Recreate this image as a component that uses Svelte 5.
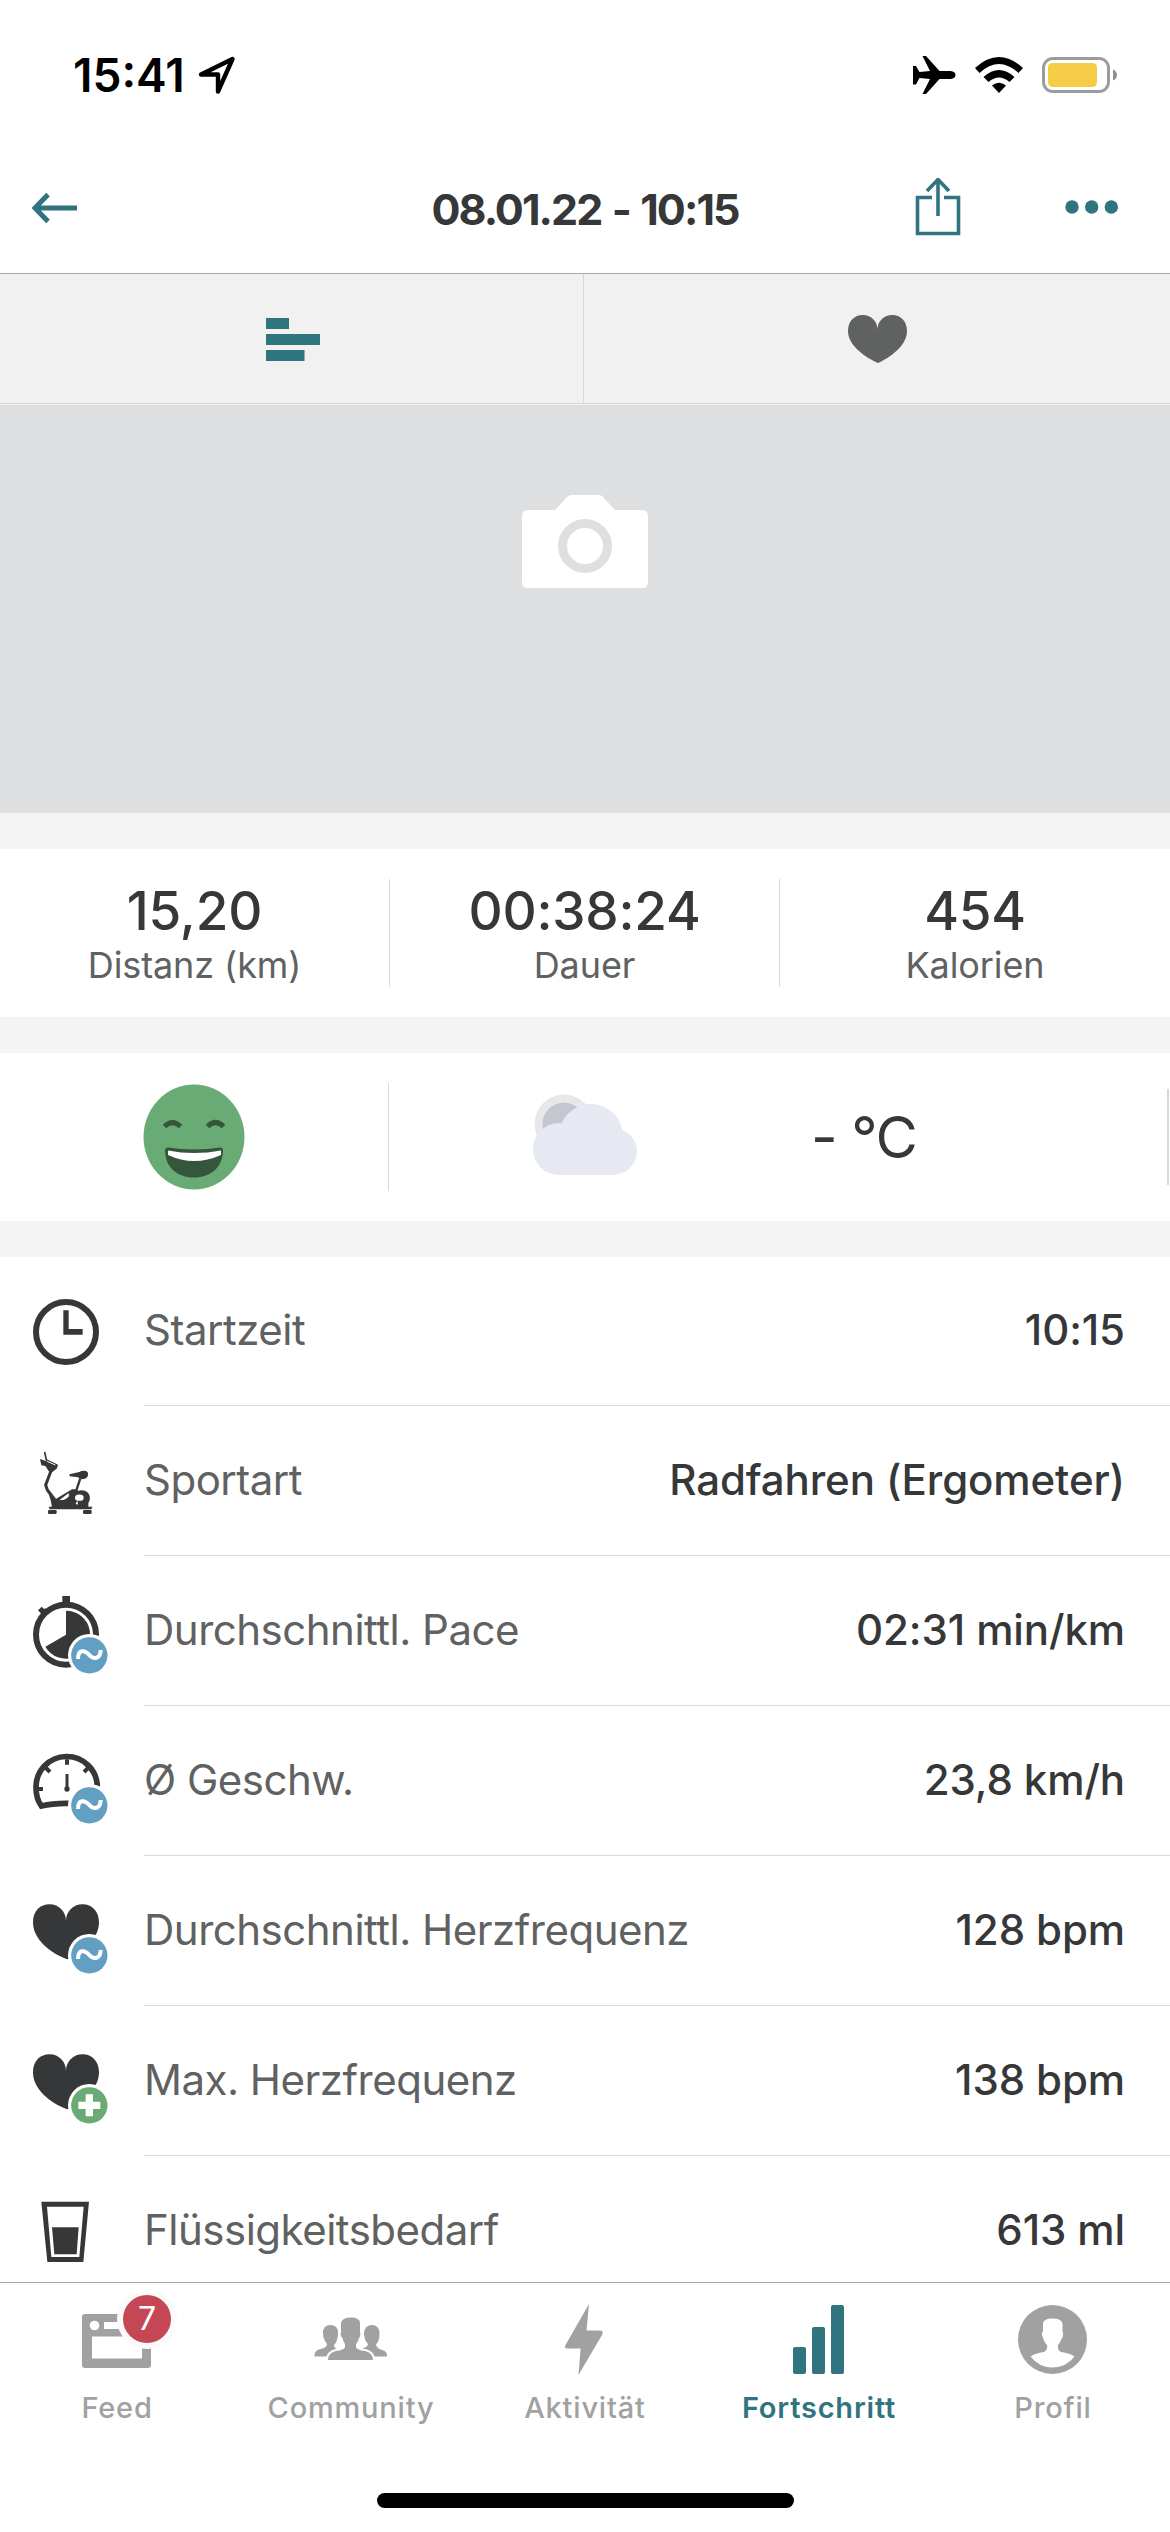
<script lang="ts">
	type Row = { icon: string; badge?: 'avg' | 'max'; label: string; value: string };

	const stats = [
		{ value: '15,20', label: 'Distanz (km)' },
		{ value: '00:38:24', label: 'Dauer' },
		{ value: '454', label: 'Kalorien' }
	];

	const rows: Row[] = [
		{ icon: 'clock', label: 'Startzeit', value: '10:15' },
		{ icon: 'bike', label: 'Sportart', value: 'Radfahren (Ergometer)' },
		{ icon: 'stopwatch', badge: 'avg', label: 'Durchschnittl. Pace', value: '02:31 min/km' },
		{ icon: 'speed', badge: 'avg', label: 'Ø Geschw.', value: '23,8 km/h' },
		{ icon: 'heart', badge: 'avg', label: 'Durchschnittl. Herzfrequenz', value: '128 bpm' },
		{ icon: 'heart', badge: 'max', label: 'Max. Herzfrequenz', value: '138 bpm' },
		{ icon: 'glass', label: 'Flüssigkeitsbedarf', value: '613 ml' }
	];

	const tabs = ['Feed', 'Community', 'Aktivität', 'Fortschritt', 'Profil'];
	let active = $state('Fortschritt');
</script>

<div class="screen">
	<div class="status-bar">
		<div class="status-time">
			<span>15:41</span>
			<svg width="38" height="40" viewBox="0 0 38 40" fill="none" stroke="#000" stroke-width="4.4" stroke-linejoin="round">
				<path d="M34.5 4L3 19.5H20V36.5Z" />
			</svg>
		</div>
		<div class="status-icons">
			<svg width="43" height="40" viewBox="0 0 43 40">
				<path d="M0 11H3L6.5 17L17 16L9.5 1H13L26.5 16H37.5Q42.5 16.5 42.5 20Q42.5 23.5 37.5 24H26.5L13 39H9.5L17 24L6.5 23L3 29.5H0Z" />
			</svg>
			<svg width="48" height="38" viewBox="0 0 48 38">
				<path d="M0 12Q24 -10 48 12L43.5 17Q24 -1 4.5 17Z" />
				<path d="M8.5 21Q24 7 39.5 21L34.5 26Q24 17 13.5 26Z" />
				<path d="M17 29.5Q24 24 31 29.5L24 37Z" />
			</svg>
			<svg width="76" height="38" viewBox="0 0 76 38">
				<rect x="1.5" y="2.5" width="65" height="33" rx="9.5" fill="none" stroke="#9c9c9c" stroke-width="3" />
				<rect x="6" y="7" width="49" height="24" rx="4.5" fill="#f6cc46" />
				<path d="M71 13.5Q75 15.5 75 19Q75 22.5 71 24.5Z" fill="#8e8e8e" />
			</svg>
		</div>
	</div>

	<header class="nav">
		<button class="icon-btn" aria-label="Zurück">
			<svg width="48" height="32" viewBox="0 0 48 32" fill="none" stroke="currentColor" stroke-width="5">
				<path d="M46 16H4M17 2.5L4 16L17 29.5" />
			</svg>
		</button>
		<h1>08.01.22 - 10:15</h1>
		<div class="nav-actions">
			<button class="icon-btn" aria-label="Teilen">
				<svg width="46" height="60" viewBox="0 0 46 60" fill="none" stroke="currentColor" stroke-width="3.6">
					<path d="M17 19.5H2.5V55.5H43.5V19.5H29M23 38V3M12 13L23 1.5L34 13" />
				</svg>
			</button>
			<button class="icon-btn" aria-label="Mehr">
				<svg width="54" height="16" viewBox="0 0 54 16" fill="currentColor">
					<circle cx="8" cy="7" r="6.7" />
					<circle cx="27.7" cy="7" r="6.7" />
					<circle cx="47.3" cy="7" r="6.7" />
				</svg>
			</button>
		</div>
	</header>

	<main>
		<div class="segments">
			<div class="segment">
				<svg width="54" height="44" viewBox="0 0 54 44" fill="#30747f">
					<path d="M0 1H23V12H0ZM0 17H54V28H0ZM0 33H38.5V44H0Z" />
				</svg>
			</div>
			<div class="segment">
				<svg width="59" height="48" viewBox="0 0 198 165" preserveAspectRatio="none" fill="#606161">
					<path d="M101 165C60 147 0 106 0 55C0 20 22 0 49 0C80 0 99 24 99 50C99 24 118 0 149 0C176 0 198 20 198 55C198 106 140 147 101 165Z" />
				</svg>
			</div>
		</div>

		<div class="photo">
			<svg width="126" height="94" viewBox="0 0 126 94">
				<path fill="#fff" d="M6 15H33L45 2Q47 0 49 0H77Q79 0 81 2L93 15H120Q126 15 126 21V87Q126 93 120 93H6Q0 93 0 87V21Q0 15 6 15Z" />
				<circle cx="63" cy="51" r="22.5" fill="none" stroke="#dedfe1" stroke-width="9" />
			</svg>
		</div>

		<section class="strip">
			{#each stats as stat}
				<div class="stat">
					<div class="stat-value">{stat.value}</div>
					<div class="stat-label">{stat.label}</div>
				</div>
			{/each}
		</section>

		<section class="strip">
			<div class="mood">
				<svg width="102" height="106" viewBox="0 0 102 106">
					<ellipse cx="51" cy="53" rx="50.5" ry="52.5" fill="#69ab74" />
					<path d="M21.5 42.5Q29.5 34.5 37.5 42.5M64.5 42.5Q72.5 34.5 80.5 42.5" fill="none" stroke="#35563a" stroke-width="5" />
					<path d="M22 66Q22 63 25 63.5Q51 67.5 77 63.5Q80 63 80 66C80 83 68 93.5 51 93.5S22 83 22 66Z" fill="#35563a" />
					<path d="M25 66.5Q51 71.5 78 66.5V71Q51 83 25 71Z" fill="#fff" />
				</svg>
			</div>
			<div class="weather">
				<svg width="106" height="84" viewBox="0 0 106 84">
					<circle cx="32" cy="32" r="29.5" fill="#e6e8ea" />
					<circle cx="32" cy="32" r="21.5" fill="#c4c7cf" />
					<g fill="#e6e9f2">
						<circle cx="59" cy="44" r="32" />
						<circle cx="27" cy="57" r="26" />
						<circle cx="82" cy="59.5" r="23" />
						<rect x="27" y="50" width="55" height="33" />
					</g>
				</svg>
				<span class="temp">- °C</span>
			</div>
		</section>

		<ul class="details">
			{#each rows as row}
				<li>
					<svg width="144" height="150" viewBox="0 0 432 450" fill="#363738">
						{#if row.icon === 'clock'}
							<circle cx="198" cy="228" r="90" fill="none" stroke="#363738" stroke-width="18" />
							<path d="M190 163H206V219H248V236H190Z" />
						{:else if row.icon === 'bike'}
							<g transform="translate(0 -438)">
								<path d="M120 597L174 616L170 626L157 636H148L136 618L124 616Z" />
								<path d="M134 576L139 600L172 616" fill="none" stroke="#363738" stroke-width="5" />
								<path d="M142 604L166 615" stroke="#fff" stroke-width="3" />
								<path d="M154 630L137 675L142 690L165 720" fill="none" stroke="#363738" stroke-width="9" />
								<path d="M208 643L238 636Q246 631 258 633Q266 637 264 646Q262 656 248 658Q238 657 234 652L209 649Z" />
								<path d="M241 655L228 694" stroke="#363738" stroke-width="7" />
								<path d="M146 702L166 718L216 688L226 688L234 692Q258 687 267 703Q273 717 265 729V742H156L152 720Z" />
								<ellipse cx="238" cy="713" rx="13" ry="9.5" fill="#fff" />
								<path d="M181 719Q192 722 204 711Q209 704 205 701ZM232 724L228 731L234 733" fill="#fff" stroke="#fff" stroke-width="2" />
								<path d="M146 740H277L274 748H149Z" />
								<rect x="144" y="750" width="26" height="12" rx="4" />
								<rect x="249" y="750" width="26" height="12" rx="4" />
							</g>
						{:else if row.icon === 'stopwatch'}
							<circle cx="198" cy="236" r="90" fill="none" stroke="#363738" stroke-width="18" />
							<rect x="187" y="120" width="23" height="20" />
							<path d="M114 163L125 152L132 159L136 157L144 165L130 178L121 170Z" />
							<path d="M198 236V164A72 72 0 1 1 136 272Z" />
						{:else if row.icon === 'speed'}
							<g transform="translate(0 -438)" fill="none" stroke="#363738">
								<path d="M207 730Q160 729 124 738Q108 715 108 683A92 92 0 0 1 292 680" stroke-width="17" />
								<path d="M201 598V614M138 624L150 636M264 624L252 636M112 687H129" stroke-width="12" />
								<path d="M201 642V688" stroke-width="9" />
								<circle cx="201" cy="687" r="8" fill="#363738" stroke="none" />
							</g>
						{:else if row.icon === 'heart'}
							<path d="M202 310C150 291 99 250 99 199C99 164 122 145 148 145C178 145 198 168 198 195C198 168 218 145 248 145C276 145 297 166 297 199C297 250 246 291 202 310Z" />
						{:else}
							<g transform="translate(0 -888)">
								<path fill-rule="evenodd" d="M124 1025H267L250 1206H142ZM141 1040L154 1191H238L251 1040Z" />
								<path d="M156 1102H236L230 1183H163Z" />
							</g>
						{/if}
						{#if row.badge}
							<circle cx="268" cy="298" r="64" fill="#fff" />
							<circle cx="268" cy="298" r="54.5" fill={row.badge === 'avg' ? '#629fc3' : '#69ab74'} />
							{#if row.badge === 'avg'}
								<path d="M234 309C234 280 253 280 268 297S302 306 302 282" fill="none" stroke="#fff" stroke-width="12" />
							{:else}
								<path d="M257 265H279V287H301V309H279V331H257V309H235V287H257Z" fill="#fff" />
							{/if}
						{/if}
					</svg>
					<div class="row-body">
						<span class="row-label">{row.label}</span>
						<span class="row-value">{row.value}</span>
					</div>
				</li>
			{/each}
		</ul>
	</main>

	<nav class="tab-bar">
		<div class="tabs">
			{#each tabs as tab}
				<button class="tab" class:active={active === tab} onclick={() => (active = tab)}>
					<svg width="120" height="90" viewBox="0 0 120 90" fill="currentColor">
						{#if tab === 'Feed'}
							<path fill-rule="evenodd" d="M28 21H91Q94 21 94 24V72Q94 75 91 75H28Q25 75 25 72V24Q25 21 28 21ZM35 43.5V65.5H85V43.5Z" />
							<circle cx="37.5" cy="32.5" r="4.8" fill="#fff" />
							<rect x="47" y="29" width="30" height="7" fill="#fff" />
							<circle cx="90" cy="26" r="30" fill="#fafafa" />
							<circle cx="90" cy="26" r="24" fill="#c54756" />
							<text x="90" y="37" class="badge-text">7</text>
						{:else if tab === 'Community'}
							<path d="M32 40Q32 32 39.5 32T47 40Q47 48 43 52Q43 56 49 57L41 63.5H23.5Q23 58 28 56.5Q36 55 36 51Q32 46 32 40Z" />
							<path d="M73 40Q74 32 81 32T88.5 40Q88.5 49 85 51Q85 55 91 57Q96.5 58 96 63.5H80L70 56Q77 54 77 51Q73 47 73 40Z" />
							<path d="M50 30Q51 24.5 60 24.5T69 30V39Q70 43 68 45Q67 49 65 51V54Q66 57 74 58Q82 60 82 67H37Q37 60 45 58Q53 57 54 54V51Q52 48 51.5 45Q49 43 50 39Z" stroke="#fff" stroke-width="4" paint-order="stroke" />
						{:else if tab === 'Aktivität'}
							<path d="M64 11L40.5 52Q39 55.5 42 55.5H55.6L53.5 82L77 42Q79 38 75.5 37.5H61.5Z" />
						{:else if tab === 'Fortschritt'}
							<rect x="34" y="54" width="13" height="27" rx="2" />
							<rect x="53" y="34" width="13" height="47" rx="2" />
							<rect x="72" y="12" width="13" height="69" rx="2" />
						{:else}
							<circle cx="59.5" cy="46.5" r="34.5" />
							<path d="M50 31Q50 25.5 59.5 25.5T69.5 31V38Q71 42 69 45Q67 50 65 52Q64 57 68 59Q77 60 81.5 63.5Q73 74.5 59.5 74.5T37.5 63.5Q42 60 51 59Q55 57 54 52Q51 49 50 45Q48 41 50 38Z" fill="#fff" />
						{/if}
					</svg>
					<span>{tab}</span>
				</button>
			{/each}
		</div>
		<div class="home-indicator"></div>
	</nav>
</div>

<style>
	:global(body) {
		background: #fff;
	}

	.screen {
		width: 1170px;
		height: 2532px;
		display: flex;
		flex-direction: column;
		overflow: hidden;
		background: #fff;
		color: #363738;
		font-family: Inter, 'Liberation Sans', sans-serif;
	}

	svg {
		display: block;
		flex: none;
	}

	button {
		padding: 0;
		border: none;
		background: none;
		font: inherit;
		cursor: pointer;
	}

	.status-bar {
		box-sizing: border-box;
		height: 143px;
		padding: 6px 52px 0 73px;
		display: flex;
		align-items: center;
		justify-content: space-between;
		color: #000;
	}

	.status-time {
		display: flex;
		align-items: center;
		gap: 13px;
		font-size: 46px;
		font-weight: 600;
	}

	.status-icons {
		display: flex;
		align-items: center;
		gap: 19px;
	}

	.nav {
		height: 130px;
		padding: 0 31px;
		display: grid;
		grid-template-columns: 1fr auto 1fr;
		align-items: center;
		border-bottom: 1px solid #a8a8a8;
	}

	h1 {
		margin: 3px 0 0;
		font-size: 43px;
		font-weight: 700;
		line-height: 1;
		letter-spacing: -1.9px;
		word-spacing: 2px;
	}

	.icon-btn {
		color: #30747f;
	}

	.nav-actions {
		padding-right: 21px;
		display: flex;
		align-items: center;
		justify-content: flex-end;
		gap: 103px;
	}

	main {
		flex: 1;
		min-height: 0;
		overflow: hidden;
		background: #f4f4f4;
	}

	.segments {
		display: grid;
		grid-template-columns: 584px 1fr;
		height: 129px;
		background: #f1f1f1;
		border-bottom: 1px solid #d4d5d5;
	}

	.segment {
		display: flex;
		align-items: center;
		justify-content: center;
	}

	.segment:first-child {
		padding-left: 2px;
		border-right: 1px solid #d8d8d8;
	}

	.photo {
		height: 318px;
		margin-top: 1px;
		padding-top: 90px;
		display: flex;
		justify-content: center;
		align-items: flex-start;
		background: #dedfe1;
	}

	.strip {
		height: 168px;
		margin-top: 36px;
		display: flex;
		align-items: center;
		background: #fff;
	}

	.stat {
		box-sizing: border-box;
		width: 390px;
		height: 108px;
		text-align: center;
		border-right: 1px solid #d8d9da;
	}

	.stat:last-child {
		border-right: none;
	}

	.stat-value {
		margin-top: 4px;
		font-size: 53px;
		line-height: 56px;
		font-weight: 500;
		letter-spacing: -0.2px;
	}

	.stat-label {
		font-size: 36px;
		line-height: 52px;
		letter-spacing: -0.1px;
		color: #606161;
	}

	.mood {
		box-sizing: border-box;
		width: 389px;
		height: 108px;
		display: flex;
		align-items: center;
		justify-content: center;
		border-right: 1px solid #d8d9da;
	}

	.weather {
		box-sizing: border-box;
		width: 780px;
		height: 96px;
		padding-left: 143px;
		display: flex;
		align-items: center;
		gap: 173px;
		border-right: 2px solid #d8d9da;
	}

	.weather svg {
		margin-top: -6px;
	}

	.temp {
		font-size: 58px;
		letter-spacing: -1.4px;
	}

	.details {
		margin: 36px 0 0;
		padding: 0;
		list-style: none;
		background: #fff;
	}

	.details li {
		height: 150px;
		display: flex;
		align-items: flex-end;
	}

	.details li:first-child {
		height: 149px;
	}

	.row-body {
		flex: 1;
		box-sizing: border-box;
		height: 150px;
		padding: 0 45px 2px 0;
		display: flex;
		align-items: center;
		justify-content: space-between;
		border-bottom: 1px solid #d8d9da;
		font-size: 42px;
		white-space: nowrap;
	}

	.row-label {
		color: #606161;
		letter-spacing: -0.5px;
	}

	.row-value {
		font-weight: 500;
		letter-spacing: -0.1px;
	}

	.tab-bar {
		height: 249px;
		display: flex;
		flex-direction: column;
		align-items: center;
		background: #fff;
		border-top: 1px solid #a8a8a8;
	}

	.tabs {
		width: 100%;
		height: 210px;
		display: grid;
		grid-template-columns: repeat(5, 1fr);
	}

	.tab {
		padding-top: 10px;
		display: flex;
		flex-direction: column;
		align-items: center;
		color: #a1a1a1;
		font-size: 29px;
		line-height: 50px;
		font-weight: 500;
		letter-spacing: 0.8px;
	}

	.tab.active {
		color: #30747f;
		font-weight: 600;
	}

	.badge-text {
		fill: #fff;
		font-size: 32px;
		font-weight: 400;
		letter-spacing: 0;
		text-anchor: middle;
	}

	.home-indicator {
		width: 417px;
		height: 15px;
		border-radius: 8px;
		background: #000;
	}
</style>
